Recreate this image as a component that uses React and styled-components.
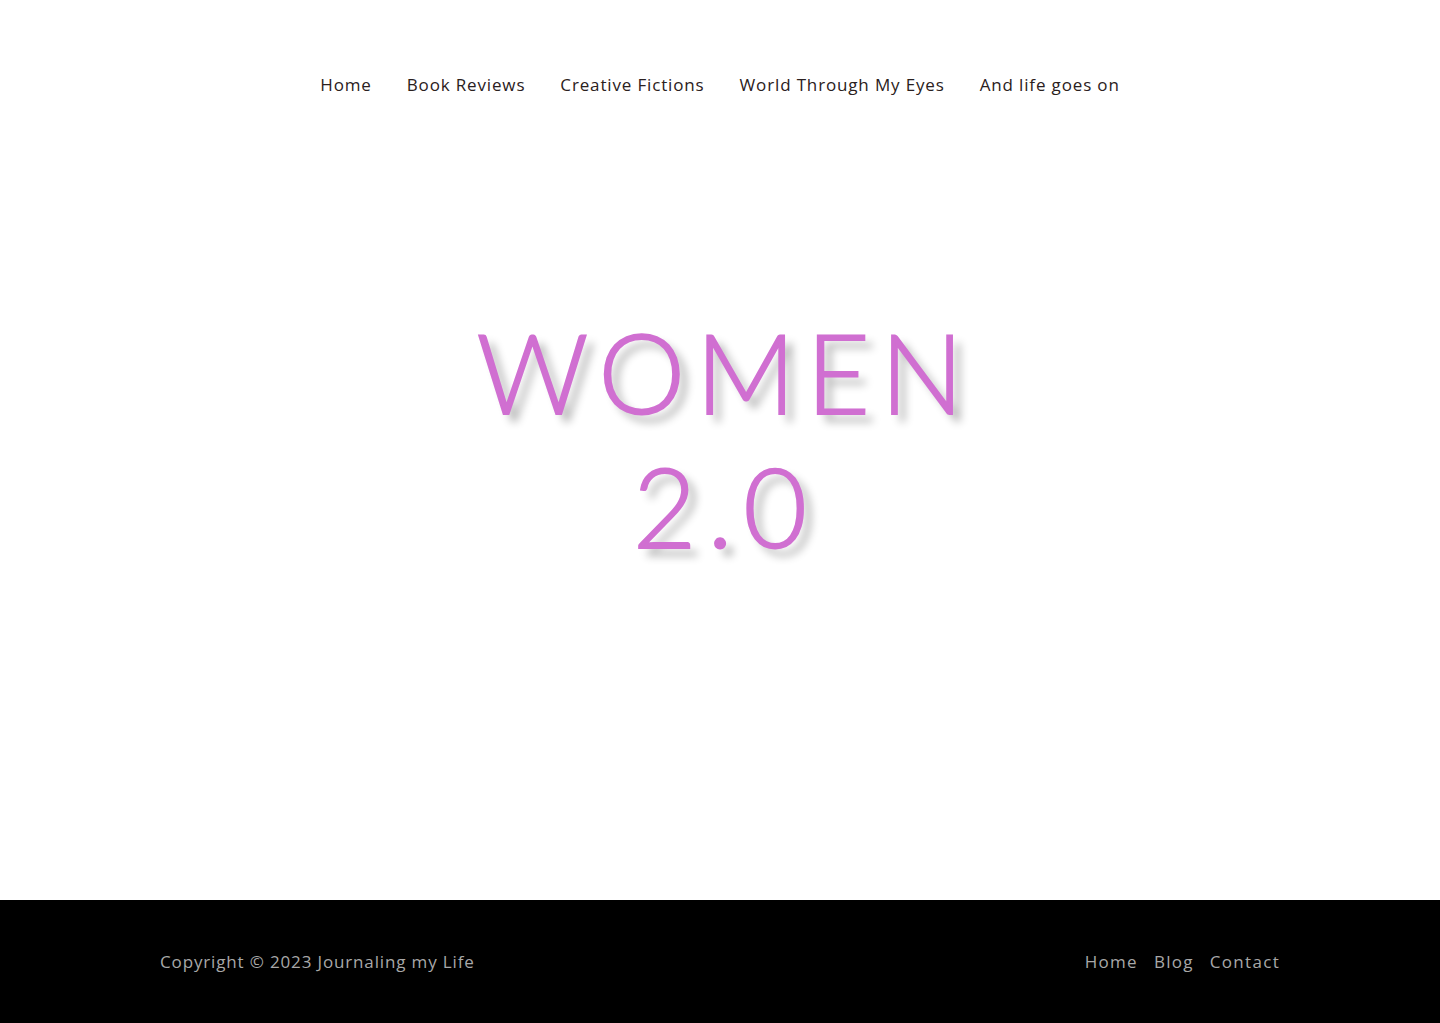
import React from 'react'
import styled, { createGlobalStyle } from 'styled-components'

const GlobalStyle = createGlobalStyle`
    html, body {
        margin: 0;
        padding: 0;
        background: #fff;
    }
    body {
        font-family: "Open Sans", "Liberation Sans", sans-serif;
    }
`

const Page = styled.div`
    min-height: 1023px;
    display: flex;
    flex-direction: column;
`
const Header = styled.header`
    height: 170px;
    display: flex;
    justify-content: center;
    align-items: flex-start;
    padding-top: 73px;
    box-sizing: border-box;
`
const Nav = styled.nav`
    display: flex;
    gap: 35px;
`
const NavLink = styled.a`
    font-size: 17px;
    line-height: 24px;
    color: #2a2020;
    letter-spacing: 0.85px;
    text-decoration: none;
    cursor: pointer;
`
const Hero = styled.main`
    flex: 1;
    display: flex;
    justify-content: center;
    align-items: flex-start;
    padding-top: 134px;
`
const Title = styled.h1`
    margin: 0;
    font-family: "Lato", "Open Sans", sans-serif;
    font-weight: 300;
    font-size: 110px;
    line-height: 134px;
    letter-spacing: 10.5px;
    text-align: center;
    color: #d06fd1;
    -webkit-text-stroke: 1.8px #d06fd1;
    text-shadow: 8px 8px 8px rgba(0, 0, 0, 0.3);
    padding-left: 10.5px;
`
const Footer = styled.footer`
    height: 123px;
    background: #000;
    display: flex;
    justify-content: space-between;
    align-items: center;
    padding: 0 160px;
    box-sizing: border-box;
`
const FooterText = styled.span`
    font-size: 17px;
    color: #a8a8a8;
    letter-spacing: ${props => props.wide ? '1.3px' : '0.85px'};
`
const FooterLinks = styled.div`
    display: flex;
    gap: 16px;
`

const navItems = ['Home', 'Book Reviews', 'Creative Fictions', 'World Through My Eyes', 'And life goes on']
const footerItems = ['Home', 'Blog', 'Contact']

const App = () => {
  return (
    <Page>
        <GlobalStyle />
        <Header>
            <Nav>
                {navItems.map((item)=> <NavLink key={item}>{item}</NavLink>)}
            </Nav>
        </Header>
        <Hero>
            <Title>WOMEN<br/>2.0</Title>
        </Hero>
        <Footer>
            <FooterText>Copyright © 2023 Journaling my Life</FooterText>
            <FooterLinks>
                {footerItems.map((item)=> <FooterText wide key={item}>{item}</FooterText>)}
            </FooterLinks>
        </Footer>
    </Page>
  )
}

export default App
